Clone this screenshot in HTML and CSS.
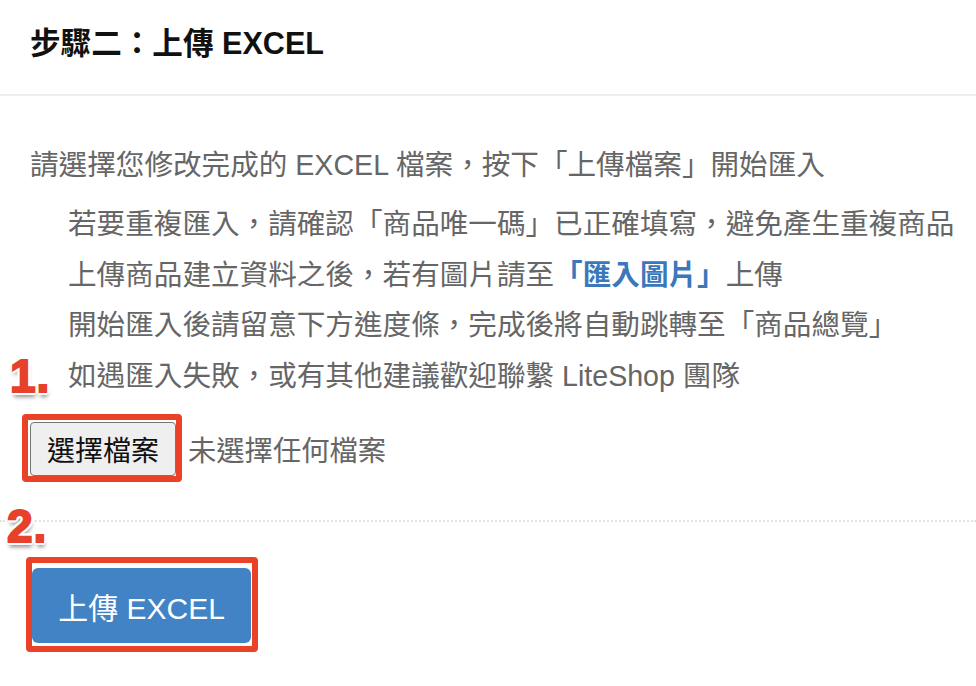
FILE: index.html
```html
<!DOCTYPE html>
<html lang="zh-Hant">
<head>
<meta charset="utf-8">
<title>步驟二：上傳 EXCEL</title>
<link rel="stylesheet" href="styles.css">
</head>
<body>
<div class="page">
  <div class="panel-header">
    <h2 class="panel-title">步驟二：上傳 EXCEL</h2>
  </div>
  <div class="panel-body">
    <p class="lead">請選擇您修改完成的 EXCEL 檔案，按下「上傳檔案」開始匯入</p>
    <ul class="notes">
      <li>若要重複匯入，請確認「商品唯一碼」已正確填寫，避免產生重複商品</li>
      <li>上傳商品建立資料之後，若有圖片請至<a class="link" href="#">「匯入圖片」</a>上傳</li>
      <li>開始匯入後請留意下方進度條，完成後將自動跳轉至「商品總覽」</li>
      <li>如遇匯入失敗，或有其他建議歡迎聯繫 LiteShop 團隊</li>
    </ul>
    <div class="file-row">
      <span class="mark-box mark-file"><span class="file-btn">選擇檔案</span></span>
      <span class="file-name">未選擇任何檔案</span>
    </div>
  </div>
  <div class="panel-footer">
    <span class="mark-box mark-upload"><button class="upload-btn" type="button">上傳 EXCEL</button></span>
  </div>
  <span class="step-label step-1">1.</span>
  <span class="step-label step-2">2.</span>
</div>
</body>
</html>
```

FILE: styles.css
```css
html, body {
  margin: 0;
  padding: 0;
  background: #ffffff;
}

body {
  font-family: "Liberation Sans", "Noto Sans CJK TC", sans-serif;
  color: #666666;
}

.page {
  position: relative;
  width: 976px;
  height: 686px;
  overflow: hidden;
}

.panel-header {
  padding: 23px 30px 31px;
  border-bottom: 2px solid #eceef1;
}

.panel-title {
  margin: 0;
  font-size: 30.6px;
  line-height: 40px;
  font-weight: bold;
  color: #111111;
}

.panel-body {
  padding: 44px 0 0 30px;
}

.lead {
  margin: 0;
  font-size: 28.6px;
  line-height: 50px;
}

.notes {
  list-style: none;
  margin: 9px 0 0;
  padding: 0 0 0 38px;
  font-size: 28.6px;
  line-height: 50.6px;
  white-space: nowrap;
}

.link {
  color: #3b78bb;
  font-weight: bold;
  text-decoration: none;
}

.file-row {
  display: flex;
  align-items: center;
  gap: 6px;
  margin: 13px 0 0 -8px;
}

.mark-box {
  display: inline-flex;
  border: 6px solid #ea4228;
  border-radius: 4px;
}

.mark-file {
  padding: 2px 0 0 2px;
}

.file-btn {
  display: inline-flex;
  align-items: center;
  justify-content: center;
  box-sizing: border-box;
  width: 146px;
  height: 54px;
  border: 1px solid #767676;
  border-radius: 4px;
  background: #efefef;
  color: #111111;
  font-size: 28px;
}

.file-name {
  font-size: 28.3px;
  color: #666666;
}

.panel-footer {
  margin-top: 38px;
  border-top: 2px dotted #e2e2e2;
  padding: 35px 0 0 26px;
}

.mark-upload {
  padding: 5px 1px 3px 0;
}

.upload-btn {
  box-sizing: border-box;
  width: 219px;
  height: 75px;
  border: 0;
  border-radius: 6px;
  background: #4183c4;
  color: #ffffff;
  font-family: "Liberation Sans", "Noto Sans CJK TC", sans-serif;
  font-size: 30px;
  padding: 0;
}

.step-label {
  position: absolute;
  font-family: "Liberation Sans", sans-serif;
  font-weight: bold;
  font-size: 46px;
  line-height: 46px;
  color: #e8412b;
  -webkit-text-stroke: 2px #e8412b;
  letter-spacing: 1px;
  text-shadow:
    3px 0 0 #fff, -3px 0 0 #fff, 0 3px 0 #fff, 0 -3px 0 #fff,
    2px 2px 0 #fff, -2px 2px 0 #fff, 2px -2px 0 #fff, -2px -2px 0 #fff,
    3px 1px 0 #fff, -3px 1px 0 #fff, 3px -1px 0 #fff, -3px -1px 0 #fff,
    1px 3px 0 #fff, -1px 3px 0 #fff, 1px -3px 0 #fff, -1px -3px 0 #fff,
    1px 5px 4px rgba(0, 0, 0, 0.45);
}

.step-1 {
  left: 10px;
  top: 353px;
}

.step-2 {
  left: 7px;
  top: 503px;
}
```
